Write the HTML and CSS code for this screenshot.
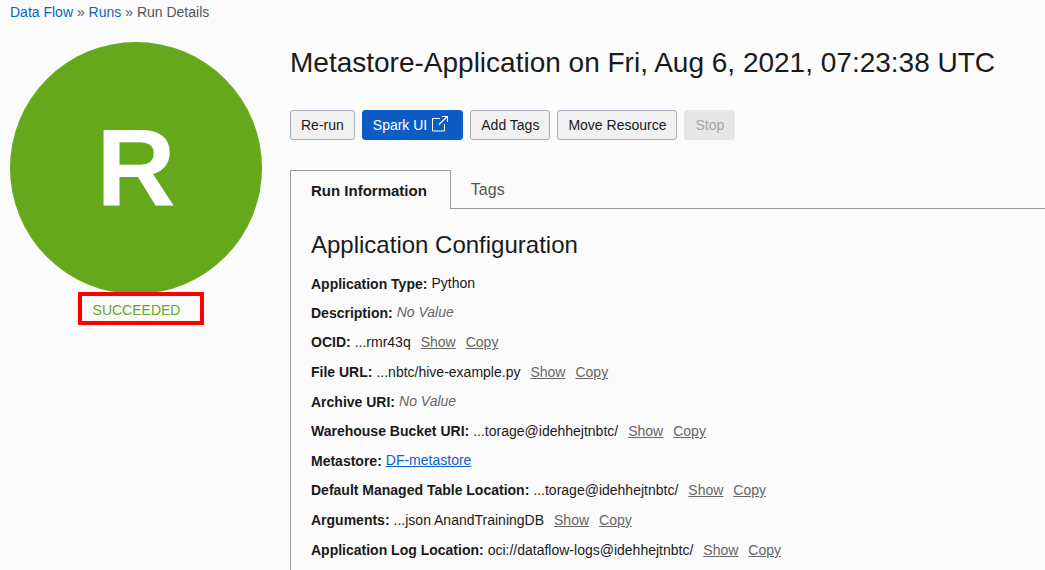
FILE: index.html
```html
<!DOCTYPE html>
<html lang="en">
<head>
<meta charset="utf-8">
<title>Run Details</title>
<link rel="stylesheet" href="styles.css">
</head>
<body>
<nav class="breadcrumb" aria-label="Breadcrumb">
  <a href="#">Data Flow</a> » <a href="#">Runs</a> » <span>Run Details</span>
</nav>
<div class="page">
  <aside class="status">
    <div class="status-circle">R</div>
    <div class="status-label">SUCCEEDED</div>
  </aside>
  <main class="content">
    <h1 class="title">Metastore-Application on Fri, Aug 6, 2021, 07:23:38 UTC</h1>
    <div class="actions">
      <button class="btn" type="button">Re-run</button>
      <button class="btn btn-primary" type="button">Spark UI
        <svg class="icon" viewBox="0 0 16 16" width="16" height="16" fill="none" stroke="currentColor" aria-hidden="true"><path d="M8 2.5H.5v12.500h12V8"/><path d="M7 8.500L15 .8M10 .5h5.500V6" stroke-width="1.200"/></svg>
      </button>
      <button class="btn" type="button">Add Tags</button>
      <button class="btn" type="button">Move Resource</button>
      <button class="btn" type="button" disabled>Stop</button>
    </div>
    <div class="tabs" role="tablist">
      <button class="tab tab-active" type="button" role="tab" aria-selected="true">Run Information</button>
      <button class="tab" type="button" role="tab" aria-selected="false">Tags</button>
    </div>
    <section class="panel" role="tabpanel">
      <h2 class="subtitle">Application Configuration</h2>
      <dl class="details">
        <div class="row row-plain"><dt>Application Type:</dt><dd>Python</dd></div>
        <div class="row row-plain"><dt>Description:</dt><dd class="empty">No Value</dd></div>
        <div class="row"><dt>OCID:</dt><dd>...rmr43q<a href="#">Show</a><a href="#">Copy</a></dd></div>
        <div class="row"><dt>File URL:</dt><dd>...nbtc/hive-example.py<a href="#">Show</a><a href="#">Copy</a></dd></div>
        <div class="row row-plain"><dt>Archive URI:</dt><dd class="empty">No Value</dd></div>
        <div class="row"><dt>Warehouse Bucket URI:</dt><dd>...torage@idehhejtnbtc/<a href="#">Show</a><a href="#">Copy</a></dd></div>
        <div class="row row-plain"><dt>Metastore:</dt><dd><a class="link" href="#">DF-metastore</a></dd></div>
        <div class="row"><dt>Default Managed Table Location:</dt><dd>...torage@idehhejtnbtc/<a href="#">Show</a><a href="#">Copy</a></dd></div>
        <div class="row"><dt>Arguments:</dt><dd>...json AnandTrainingDB<a href="#">Show</a><a href="#">Copy</a></dd></div>
        <div class="row"><dt>Application Log Location:</dt><dd>oci://dataflow-logs@idehhejtnbtc/<a href="#">Show</a><a href="#">Copy</a></dd></div>
      </dl>
    </section>
  </main>
</div>
</body>
</html>
```
FILE: styles.css
```css
* { box-sizing: border-box; }
body {
  margin: 0;
  background: #fbfbfb;
  color: #1a1a1a;
  font: 14px/20px "Liberation Sans", Arial, sans-serif;
}
a { color: #0b62c9; text-decoration: none; }
.breadcrumb { padding: 2px 10px 0; color: #555; }
.page { display: flex; gap: 28px; padding: 20px 0 0 10px; }
.status { flex: none; width: 252px; display: flex; flex-direction: column; align-items: center; }
.status-circle {
  display: flex;
  align-items: center;
  justify-content: center;
  width: 100%;
  aspect-ratio: 1;
  border-radius: 50%;
  background: #65a81b;
  color: #fff;
  font-size: 110px;
  font-weight: bold;
  line-height: 1;
}
.status-label {
  margin: -2px 0 0 10px;
  padding: 4px 20px 1px 11px;
  border: 4px solid #fe0000;
  background: #fbfbfb;
  color: #65a81b;
}
.content { flex: 1; min-width: 0; }
.title { margin: 0; font-size: 28px; font-weight: normal; line-height: 42px; }
.actions { display: flex; flex-wrap: wrap; gap: 7px; padding: 26px 0 30px; }
.btn {
  display: flex;
  align-items: center;
  gap: 5px;
  height: 30px;
  padding: 0 10px;
  border: 1px solid #a5adbb;
  border-radius: 3px;
  background: #f1f1f1;
  color: #1a1a1a;
  font: inherit;
}
.btn-primary { border-color: #0d5bc4; background: #0d5bc4; color: #fff; }
.btn:disabled { border-color: #e7e7e7; background: #e7e7e7; color: #a3a3a3; }
.icon { margin: -3px 4px 0 0; }
.tabs { display: flex; }
.tabs::after { content: ""; flex: 1; border-bottom: 1px solid #999; }
.tab {
  height: 39px;
  padding: 2px 20px 0;
  border: 0;
  border-bottom: 1px solid #999;
  background: none;
  color: #555;
  font: 16px/20px "Liberation Sans", Arial, sans-serif;
}
.tab-active { padding-right: 23px; border: 1px solid #999; border-bottom: 0; color: #1a1a1a; font-size: 15px; font-weight: bold; }
.panel { padding: 20px; border-left: 1px solid #999; }
.subtitle { margin: 0 0 14px; font-size: 24px; font-weight: normal; line-height: 32px; }
.details { margin: 0; }
.row { display: flex; gap: 4px; padding-bottom: 12px; line-height: 18px; }
.row dd { margin: 0; }
.row dd a { margin-left: 10px; color: #666; text-decoration: underline; }
.row dd .link { margin: 0; color: #0b62c9; }
.row dt { font-weight: bold; }
.row-plain { padding-bottom: 10px; line-height: 19px; }
.row-plain dd { line-height: 17px; }
.empty { color: #666; font-style: italic; }
```
